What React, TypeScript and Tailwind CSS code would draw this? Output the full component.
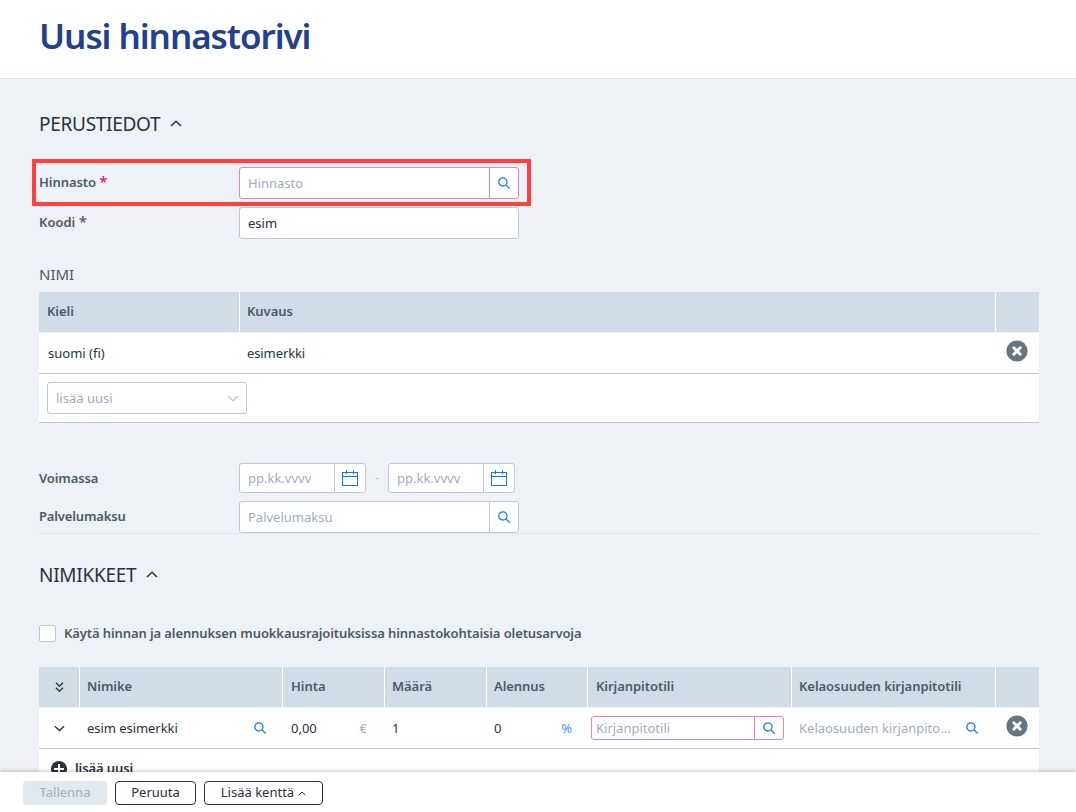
import React from 'react';

type IconProps = { className?: string };

const SearchIcon: React.FC<IconProps> = ({ className = '' }) => (
  <svg className={`h-3 w-3 shrink-0 ${className}`} viewBox="0 0 12 12" fill="none" stroke="#1a7fe8" strokeWidth="1.3">
    <circle cx="4.9" cy="4.9" r="4.1" />
    <path d="M7.8 7.8 11.7 11.6" />
  </svg>
);

const CalendarIcon: React.FC = () => (
  <svg className="h-4 w-4" viewBox="0 0 16 16" fill="none" stroke="#0f7be6" shapeRendering="crispEdges">
    <path d="M0.5 2.5h15v13h-15zM0 6.5h16M4.5 0v4M11.5 0v4" />
  </svg>
);

type ChevronProps = { className: string; up?: boolean };

const Chevron: React.FC<ChevronProps> = ({ className, up }) => (
  <svg className={className} viewBox="0 0 12 7" fill="none" stroke="currentColor" strokeWidth="1.5">
    <path d={up ? 'M1 6 6 1.2 11 6' : 'M1 1 6 5.8 11 1'} />
  </svg>
);

const RemoveIcon: React.FC = () => (
  <svg className="h-[22px] w-[22px]" viewBox="0 0 22 22">
    <circle cx="11" cy="11" r="10.6" fill="#637482" />
    <path d="M7.8 7.8l6.4 6.4M14.2 7.8l-6.4 6.4" stroke="#fff" strokeWidth="3" strokeLinecap="round" />
  </svg>
);

type SectionTitleProps = { title: string; className: string };

const SectionTitle: React.FC<SectionTitleProps> = ({ title, className }) => (
  <div className={`flex h-[30px] items-center text-[#29333d] ${className}`}>
    <h2 className="text-[19px] leading-[30px] tracking-[-0.28px] whitespace-nowrap">{title}</h2>
    <Chevron up className="mb-px ml-[10px] h-[7px] w-3" />
  </div>
);

type SearchFieldProps = { placeholder: string; required?: boolean };

const SearchField: React.FC<SearchFieldProps> = ({ placeholder, required }) => {
  const color = required ? 'border-[#ee7fb9]' : 'border-[#bcc8d6]';
  return (
    <div className={`flex h-8 w-[280px] rounded-[3px] border bg-white ${color}`}>
      <span className="flex-1 pl-2 leading-[31px] text-[#a0adba]">{placeholder}</span>
      <span className={`flex w-[29px] items-center justify-center border-l ${color}`}>
        <SearchIcon />
      </span>
    </div>
  );
};

const DateField: React.FC = () => (
  <div className="flex h-[30px] w-[127px] rounded-[3px] border border-[#bcc8d6] bg-white">
    <span className="flex-1 pl-2 leading-[29px] text-[#a0adba]">pp.kk.vvvv</span>
    <span className="flex w-[31px] items-center justify-center border-l border-[#bcc8d6]">
      <CalendarIcon />
    </span>
  </div>
);

type HeadCellProps = { children?: React.ReactNode; first?: boolean };

const HeadCell: React.FC<HeadCellProps> = ({ children, first }) => (
  <div className={`overflow-hidden bg-[#d2dce6] leading-[38px] font-semibold tracking-[-0.05px] whitespace-nowrap text-[#4b5a68] ${first ? '' : 'border-l border-white'}`}>
    {children}
  </div>
);

const App: React.FC = () => {
  return (
    <div className="flex h-[812px] w-[1076px] flex-col overflow-hidden bg-[#eef1f6] font-['Noto_Sans',sans-serif] text-[13px] text-[#29333d]">
      {/* Page title */}
      <header className="h-[79px] shrink-0 border-b border-[#dfe6ed] bg-white pl-[39px]">
        <h1 className="pt-[10px] text-[35px] leading-[52px] font-semibold tracking-[-1.05px] text-[#21408e]">Uusi hinnastorivi</h1>
      </header>

      <main className="min-h-0 flex-1 overflow-hidden pr-[37px] pl-[39px]">
        {/* Basic details */}
        <SectionTitle title="PERUSTIEDOT" className="mt-[30px]" />

        <div className="relative mt-6 flex h-10 items-center">
          <label className="w-[200px] font-semibold tracking-[-0.05px] text-[#4b5a68]">
            Hinnasto <span className="text-[15px] leading-none font-medium text-[#d8127d]">*</span>
          </label>
          <SearchField placeholder="Hinnasto" required />
          <div className="absolute -top-1 -left-[7px] h-[47px] w-[499px] border-4 border-[#ff4040]" />
        </div>
        <div className="flex h-10 items-center">
          <label className="w-[200px] font-semibold text-[#4b5a68]">
            Koodi <span className="text-[15px] leading-none font-medium">*</span>
          </label>
          <div className="h-8 w-[280px] rounded-[3px] border border-[#bcc8d6] bg-white pl-2 leading-[31px]">esim</div>
        </div>

        {/* Names by language */}
        <h3 className="mt-[19px] mb-[6px] text-[15px] leading-6 text-[#4b5a68]">NIMI</h3>
        <div className="w-[1000px] bg-white">
          <div className="grid h-[41px] grid-cols-[200px_756px_44px] border-b border-[#f1f4f7]">
            <HeadCell first><span className="ml-2">Kieli</span></HeadCell>
            <HeadCell><span className="ml-[7px]">Kuvaus</span></HeadCell>
            <HeadCell />
          </div>
          <div className="grid h-[41px] grid-cols-[200px_756px_44px] border-b border-[#bcc8d6] leading-10">
            <span className="pl-[9px]">suomi (fi)</span>
            <span className="pl-2 tracking-[-0.1px]">esimerkki</span>
            <span className="flex justify-center pt-[7px]"><RemoveIcon /></span>
          </div>
          <div className="h-[49px] border-b border-[#bcc8d6] px-2 pt-2">
            <div className="flex h-8 w-[200px] items-center justify-between rounded-[3px] border border-[#bcc8d6] pr-[7px] pl-2 text-[#a0adba]">
              <span className="leading-[31px]">lisää uusi</span>
              <Chevron className="h-[7px] w-3 text-[#bcc8d6]" />
            </div>
          </div>
        </div>

        {/* Validity and service fee */}
        <div className="mt-10 flex h-[30px] items-center">
          <label className="w-[200px] leading-[30px] font-semibold tracking-[-0.1px] text-[#4b5a68]">Voimassa</label>
          <DateField />
          <span className="w-[22px] text-center text-[#bcc8d6]">-</span>
          <DateField />
        </div>
        <div className="mt-2 flex h-[33px] border-b border-[#dfe6ed]">
          <label className="w-[200px] leading-[30px] font-semibold tracking-[-0.15px] text-[#4b5a68]">Palvelumaksu</label>
          <SearchField placeholder="Palvelumaksu" />
        </div>

        {/* Items */}
        <SectionTitle title="NIMIKKEET" className="mt-[26px]" />

        <div className="mt-[35px] flex h-[17px] items-center">
          <span className="h-[17px] w-[17px] rounded-[2px] border border-[#bcc8d6] bg-white" />
          <label className="ml-2 font-semibold tracking-[-0.1px] whitespace-nowrap text-[#4b5a68]">
            Käytä hinnan ja alennuksen muokkausrajoituksissa hinnastokohtaisia oletusarvoja
          </label>
        </div>

        <div className="mt-[25px] w-[1000px] bg-white">
          <div className="grid h-[41px] grid-cols-[40px_203px_102px_102px_101px_204px_204px_44px] border-b border-[#f1f4f7]">
            <HeadCell first>
              <span className="flex h-[39px] flex-col items-center justify-center text-[#29333d]">
                <Chevron className="h-[5px] w-[9px] stroke-2" />
                <Chevron className="h-[5px] w-[9px] stroke-2" />
              </span>
            </HeadCell>
            <HeadCell><span className="ml-[7px]">Nimike</span></HeadCell>
            <HeadCell><span className="ml-2">Hinta</span></HeadCell>
            <HeadCell><span className="ml-[7px]">Määrä</span></HeadCell>
            <HeadCell><span className="ml-[7px]">Alennus</span></HeadCell>
            <HeadCell><span className="ml-2">Kirjanpitotili</span></HeadCell>
            <HeadCell><span className="ml-[7px]">Kelaosuuden kirjanpitotili</span></HeadCell>
            <HeadCell />
          </div>
          <div className="grid h-[41px] grid-cols-[40px_203px_102px_102px_101px_204px_204px_44px] border-b border-[#bcc8d6] leading-[41px]">
            <span className="flex items-center justify-center">
              <Chevron className="h-[7px] w-[11px]" />
            </span>
            <span className="flex items-center justify-between pr-4 pl-2 tracking-[-0.05px]">
              esim esimerkki
              <SearchIcon className="mb-px" />
            </span>
            <span className="flex items-center justify-between pr-[17px] pl-[9px]">
              0,00
              <span className="text-[#a0adba]">€</span>
            </span>
            <span className="flex items-center pl-2">1</span>
            <span className="flex items-center justify-between pr-[15px] pl-2">
              0
              <span className="text-[#3d95ee]">%</span>
            </span>
            <span className="flex items-center pl-1">
              <span className="mb-px flex h-6 w-[193px] rounded-[3px] border border-[#ee7fb9] text-[#a0adba]">
                <span className="flex-1 pl-1 leading-[23px]">Kirjanpitotili</span>
                <span className="flex w-[29px] items-center justify-center border-l border-[#ee7fb9]">
                  <SearchIcon />
                </span>
              </span>
            </span>
            <span className="flex items-center justify-between pr-[17px] pl-2 text-[#a0adba]">
              Kelaosuuden kirjanpito...
              <SearchIcon className="mb-px" />
            </span>
            <span className="flex justify-center pt-[7px]"><RemoveIcon /></span>
          </div>
          <div className="flex h-10 items-center pl-3 font-semibold tracking-[-0.1px]">
            <svg className="mr-2 h-4 w-4" viewBox="0 0 16 16">
              <circle cx="8" cy="8" r="8" fill="#29333d" />
              <path d="M8 3v10M3 8h10" stroke="#fff" strokeWidth="2" />
            </svg>
            lisää uusi
          </div>
        </div>
      </main>

      {/* Action bar */}
      <footer className="relative flex h-10 shrink-0 gap-2 bg-white pt-[9px] pl-[23px] shadow-[0_-1px_4px_rgba(0,0,0,0.22)]">
        <button className="h-6 w-[84px] rounded-[4px] bg-[#e1e8ee] text-[#a0adba]">Tallenna</button>
        <button className="h-6 w-[81px] rounded-[4px] border border-[#29333d]">Peruuta</button>
        <button className="flex h-6 w-[119px] items-center justify-center gap-1 rounded-[4px] border border-[#29333d]">
          Lisää kenttä
          <Chevron up className="h-[5px] w-2" />
        </button>
      </footer>
    </div>
  );
};

export default App;
